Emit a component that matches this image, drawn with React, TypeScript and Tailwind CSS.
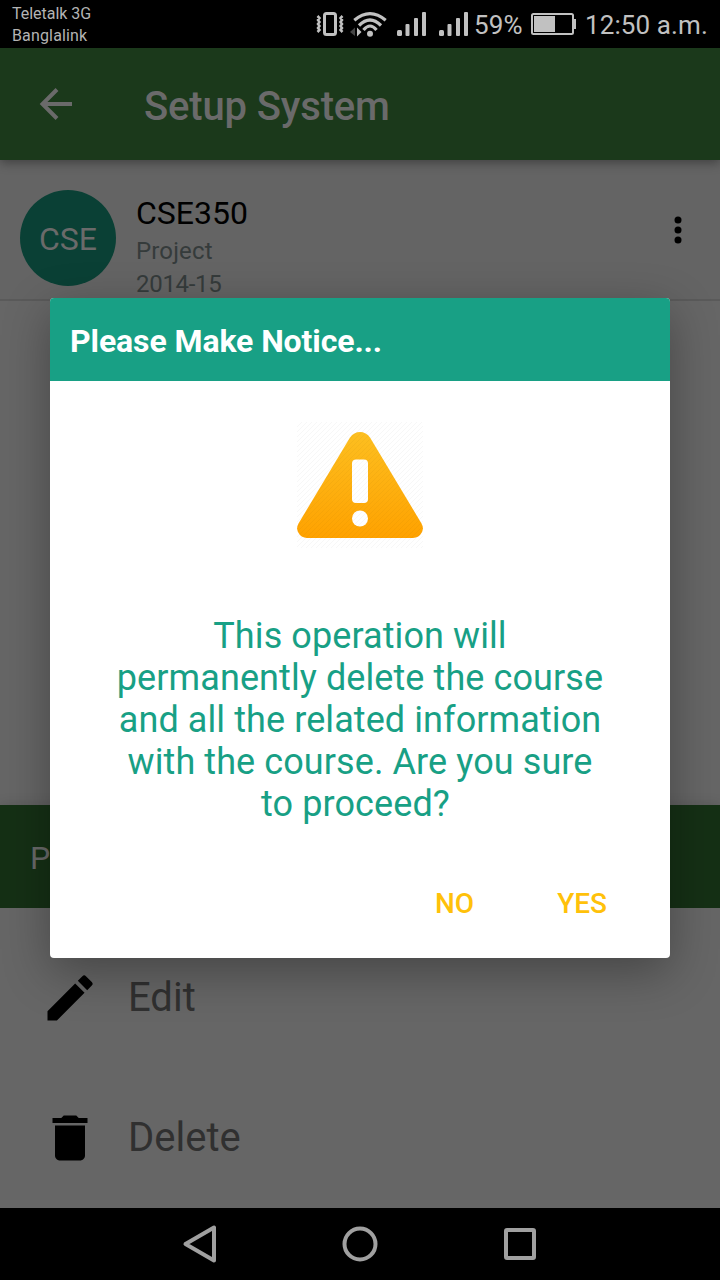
import type { ReactNode } from "react";

function StatusBar() {
  return (
    <header className="flex h-12 shrink-0 justify-between bg-black text-[#c1c1c1]">
      <div className="pl-3 pt-[3px] text-[16px] leading-[22px] text-[#b4b4b4]">
        <div className="tracking-[-0.03px]">Teletalk 3G</div>
        <div className="tracking-[0.15px]">Banglalink</div>
      </div>
      <div className="flex h-12 items-center pr-3">
        <svg className="h-12 w-[156px]" viewBox="314 0 156 48" fill="currentColor">
          <rect x="324.500" y="13.500" width="11" height="21" rx="2" fill="none" stroke="currentColor" strokeWidth="3" />
          <path
            d="M317.500 16l2 2-1.500 2 1.500 2-1.500 2 1.500 2-1.500 2 1.500 2-2 2M342.500 16l-2 2 1.500 2-1.500 2 1.500 2-1.500 2 1.500 2-1.500 2 2 2"
            fill="none"
            stroke="currentColor"
            strokeWidth="2.500"
          />
          <g fill="none" stroke="currentColor" strokeWidth="3.200">
            <path d="M354.300 20.300Q370 7 385.700 20.300" />
            <path d="M359 25.500Q370 14.500 381 25.500" />
            <path d="M363.500 30Q370 22 376.500 30" />
          </g>
          <circle cx="370" cy="33.700" r="3" />
          <path d="M350 32l5-4.500v8.500z" fill="#444" />
          <path d="M357 27.500l4.500 4.500-4.500 4.500z" />
          <rect x="397" y="30" width="5" height="6" rx="1.500" />
          <rect x="405.500" y="24" width="4" height="12" rx="1" />
          <rect x="414" y="18" width="4" height="18" rx="1" />
          <rect x="422" y="12" width="4" height="24" rx="1" />
          <rect x="439" y="30" width="5" height="6" rx="1.500" />
          <rect x="447.500" y="24" width="4" height="12" rx="1" />
          <rect x="456" y="18" width="4" height="18" rx="1" />
          <rect x="464" y="12" width="4" height="24" rx="1" />
        </svg>
        <span className="ml-1 w-[57px] whitespace-nowrap pt-0.5 text-[26px] leading-8 tracking-[0.2px]">59%</span>
        <svg className="h-12 w-[46px]" viewBox="531 0 46 48" fill="currentColor">
          <rect x="532" y="14" width="41" height="20" rx="1.500" fill="none" stroke="currentColor" strokeWidth="2" />
          <rect x="534" y="16" width="21" height="16" />
          <path d="M574 19h2v10h-2z" />
        </svg>
        <span className="ml-2 w-[123px] whitespace-nowrap pt-0.5 text-[26px] leading-8 tracking-[0.1px]">12:50 a.m.</span>
      </div>
    </header>
  );
}

function AppBar() {
  return (
    <div className="z-10 flex h-28 shrink-0 items-center bg-[#1b391b] pl-8 text-[#6a6a6a] shadow-[0_3px_10px_rgba(0,0,0,0.35)]">
      <svg className="h-12 w-12" viewBox="0 0 48 48" fill="none" stroke="currentColor" strokeWidth="4">
        <path d="M40 24H11M25 9.500L10.500 24L25 38.500" />
      </svg>
      <h1 className="ml-16 pt-[6px] text-[40px] font-medium leading-[48px] tracking-[-0.15px]">Setup System</h1>
    </div>
  );
}

function CourseRow() {
  return (
    <div className="flex h-[141px] shrink-0 border-b-2 border-[#5a5a5a] bg-[#646464] pl-5 pr-[38px]">
      <div className="mt-[30px] flex size-24 items-center justify-center rounded-full bg-[#0a4035] pt-px text-[32px] text-[#6a6a6a]">
        CSE
      </div>
      <div className="ml-5 flex-1 pt-[34px]">
        <div className="text-[32px] leading-[38px] text-black">CSE350</div>
        <div className="pt-[3px] text-[24px] leading-8 tracking-[0.15px] text-[#353b3b]">Project</div>
        <div className="text-[24px] leading-[34px] tracking-[-0.3px] text-[#353b3b]">2014-15</div>
      </div>
      <svg className="mt-[54px] h-8 w-2" viewBox="0 0 8 32">
        <circle cx="4" cy="6" r="3.500" />
        <circle cx="4" cy="16" r="3.500" />
        <circle cx="4" cy="26" r="3.500" />
      </svg>
    </div>
  );
}

function SheetItem({ icon, label }: { icon: ReactNode; label: string }) {
  return (
    <div className="flex h-[140px] items-center pl-10 text-[40px] text-[#303030]">
      <svg className="size-[60px]" viewBox="0 0 24 24" fill="black">
        {icon}
      </svg>
      <span className="ml-7">{label}</span>
    </div>
  );
}

function NavBar() {
  return (
    <nav className="flex h-[72px] shrink-0 items-center justify-center gap-[104px] bg-black">
      <svg className="size-14" viewBox="0 0 56 56" fill="none" stroke="#a0a0a0" strokeWidth="4" strokeLinejoin="round">
        <path d="M42 11.500v33L13.500 28z" />
      </svg>
      <svg className="size-14" viewBox="0 0 56 56" fill="none" stroke="#a0a0a0" strokeWidth="4">
        <circle cx="28" cy="28" r="15.500" />
      </svg>
      <svg className="size-14" viewBox="0 0 56 56" fill="none" stroke="#a0a0a0" strokeWidth="4">
        <rect x="14" y="14" width="28" height="28" rx="1" />
      </svg>
    </nav>
  );
}

function WarningIcon() {
  return (
    <svg className="h-[126px] w-[126px]" viewBox="0 0 126 126">
      <defs>
        <linearGradient id="amber" x1="0" y1="0" x2="0" y2="1">
          <stop offset="0" stopColor="#fdbf20" />
          <stop offset="1" stopColor="#ffa200" />
        </linearGradient>
        <pattern id="hatch" width="5" height="5" patternUnits="userSpaceOnUse">
          <path d="M-1 1L1-1M0 5L5 0M4 6L6 4" stroke="#000" strokeOpacity="0.045" strokeWidth="0.800" />
        </pattern>
      </defs>
      <path
        d="M53 15.500Q57 10 63 10Q69 10 73 15.500L124.500 101.500Q127 106 125 110Q122 115.900 116 115.900H10Q4 115.900 1 110Q-1 106 1.500 101.500Z"
        fill="url(#amber)"
      />
      <rect x="55" y="37.500" width="16" height="43.500" rx="4" fill="white" />
      <circle cx="63" cy="96.500" r="8" fill="white" />
      <rect width="126" height="126" fill="url(#hatch)" />
    </svg>
  );
}

function Dialog() {
  return (
    <div
      role="dialog"
      className="absolute left-[50px] top-[298px] z-20 flex h-[660px] w-[620px] flex-col overflow-hidden rounded bg-white shadow-[0_14px_48px_rgba(0,0,0,0.32)]"
    >
      <h2 className="h-[83px] bg-[#18a085] pl-5 pt-1 text-[32px] font-bold leading-[79px] tracking-[-0.1px] text-white">
        Please Make Notice...
      </h2>
      <div className="flex justify-center pt-[41px]">
        <WarningIcon />
      </div>
      <p className="mt-[67px] text-center text-[36px] leading-[42px] tracking-[0.09px] text-[#18a085]">
        This operation will
        <br />
        permanently delete the course
        <br />
        and all the related information
        <br />
        with the course. Are you sure
        <br />
        <span className="pr-[9px]">to proceed?</span>
      </p>
      <div className="mt-[61px] flex justify-end gap-[83px] pr-[63px] text-[28px] font-medium leading-[36px] text-[#ffc10a]">
        <button>NO</button>
        <button>YES</button>
      </div>
    </div>
  );
}

export default function App() {
  return (
    <div className="relative flex h-[1280px] w-[720px] flex-col overflow-hidden bg-[#666] font-['Roboto',sans-serif]">
      <StatusBar />
      <AppBar />
      <CourseRow />
      <main className="flex-1" />
      <section className="h-[403px] shrink-0 shadow-[0_0_12px_rgba(0,0,0,0.15)]">
        <div className="flex h-[103px] items-center bg-[#153015] pl-[30px] pt-0.5 text-[32px] text-[#6a6a6a]">Project</div>
        <div className="pt-5">
          <SheetItem
            label="Edit"
            icon={
              <path d="M3 17.250V21h3.750L17.810 9.940l-3.750-3.750L3 17.250zM20.710 7.040a1 1 0 0 0 0-1.410l-2.340-2.340a1 1 0 0 0-1.410 0l-1.830 1.830 3.750 3.750 1.830-1.830z" />
            }
          />
          <SheetItem
            label="Delete"
            icon={<path d="M6 19c0 1.100.9 2 2 2h8c1.100 0 2-.9 2-2V7H6v12zM19 4h-3.500l-1-1h-5l-1 1H5v2h14V4z" />}
          />
        </div>
      </section>
      <NavBar />
      <Dialog />
    </div>
  );
}
